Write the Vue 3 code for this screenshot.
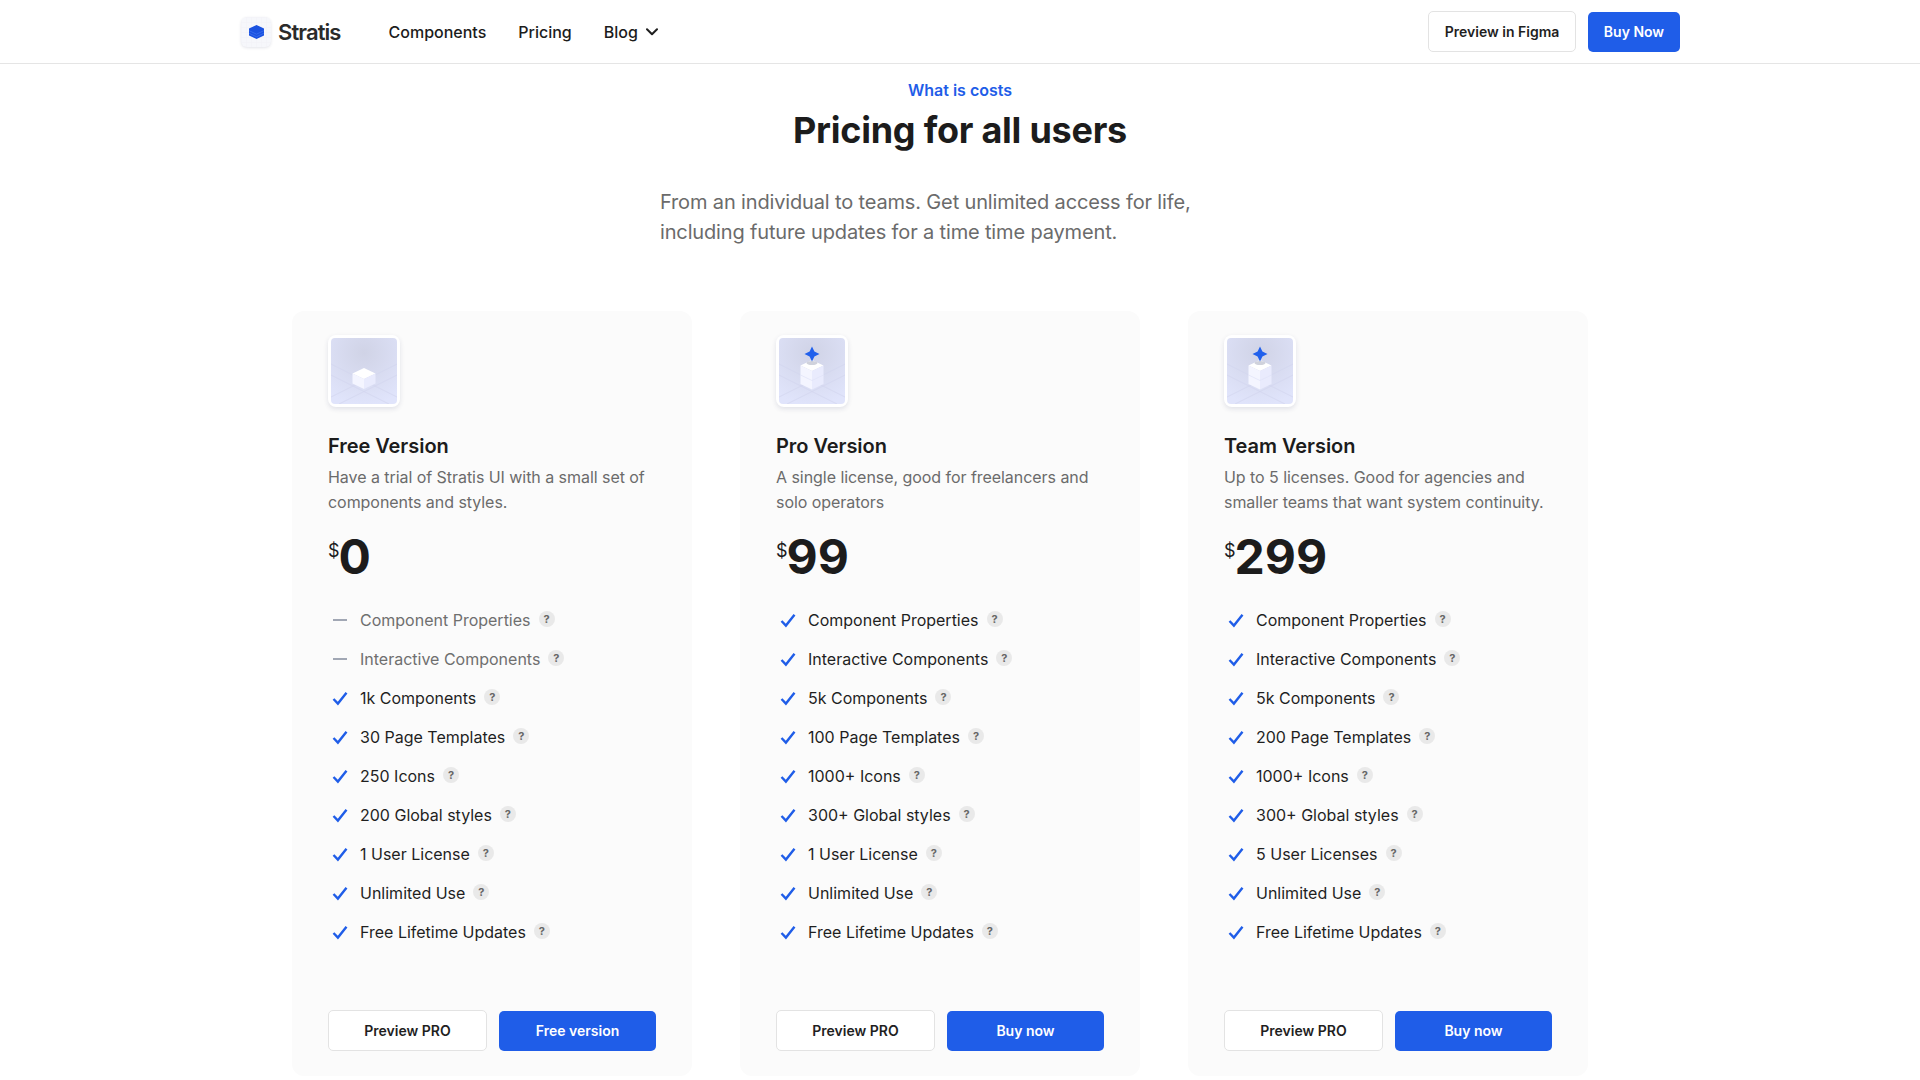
<template>
  <div class="page">
    <header class="topbar">
      <div class="topbar-inner">
        <a class="brand">
          <span class="brand-mark">
            <svg viewBox="0 0 30 30" width="30" height="30">
              <defs>
                <pattern id="markgrid" width="5" height="5" patternUnits="userSpaceOnUse">
                  <path d="M5 0H0V5" fill="none" stroke="#eceef5" stroke-width="0.6" />
                </pattern>
              </defs>
              <rect width="30" height="30" fill="url(#markgrid)" />
              <path d="M15.5 8l7.5 3.6v6.8L15.5 22 8 18.4v-6.8z" fill="#1b52e0" />
              <path d="M8 13.6l7.5 3.6 7.5-3.6M8 16.2l7.5 3.6 7.5-3.6" fill="none" stroke="#3f74f2" stroke-width="0.7" />
            </svg>
          </span>
          <span class="brand-name">Stratis</span>
        </a>
        <nav class="nav">
          <a>Components</a>
          <a>Pricing</a>
          <a class="nav-drop">
            Blog
            <svg viewBox="0 0 12 8" width="12" height="8">
              <path d="M1 1.2l5 5 5-5" fill="none" stroke="#1f1f1f" stroke-width="2" stroke-linecap="round" stroke-linejoin="round" />
            </svg>
          </a>
        </nav>
        <div class="topbar-actions">
          <button class="btn btn-outline btn-figma">Preview in Figma</button>
          <button class="btn btn-primary btn-buy">Buy Now</button>
        </div>
      </div>
    </header>

    <section class="intro">
      <p class="eyebrow">What is costs</p>
      <h1>Pricing for all users</h1>
      <p class="lead">
        From an individual to teams. Get unlimited access for life,<br />
        including future updates for a time time payment.
      </p>
    </section>

    <section class="plans">
      <article v-for="plan in plans" :key="plan.id" class="plan">
        <div class="plan-icon">
          <svg viewBox="0 0 66 66" width="66" height="66">
            <defs>
              <radialGradient :id="'glow-' + plan.id" cx="0.5" cy="0.22" r="0.8">
                <stop offset="0" stop-color="#d0d3e6" />
                <stop offset="1" stop-color="#e0e4fb" />
              </radialGradient>
            </defs>
            <rect width="66" height="66" rx="4" :fill="'url(#glow-' + plan.id + ')'" />
            <path
              d="M0 26l66 33M0 37l58 29M66 26L0 59M66 37L8 66"
              fill="none"
              stroke="#d2d6ee"
              stroke-width="0.7"
            />
            <template v-if="plan.tall">
              <path d="M33 22l11.5 5.5L33 33l-11.5-5.5z" fill="#ffffff" />
              <path d="M21.5 27.5V46L33 51.5V33z" fill="#f4f5ff" />
              <path d="M44.5 27.5V46L33 51.5V33z" fill="#e9ebfd" />
              <path d="M21.5 37L33 42.5 44.5 37" fill="none" stroke="#dfe2f8" stroke-width="0.7" />
              <ellipse cx="33" cy="25" rx="5.5" ry="2" fill="#d0d2dc" />
              <path d="M33 8.5l2.4 5.1 5.1 2.4-5.1 2.4-2.4 5.1-2.4-5.1-5.1-2.4 5.1-2.4z" fill="#2160ec" />
            </template>
            <template v-else>
              <path d="M33 30l11.5 5.5L33 41l-11.5-5.5z" fill="#ffffff" />
              <path d="M21.5 35.5v10L33 51V41z" fill="#f4f5ff" />
              <path d="M44.5 35.5v10L33 51V41z" fill="#e9ebfd" />
            </template>
          </svg>
        </div>

        <h2>{{ plan.name }}</h2>
        <p class="plan-desc">{{ plan.desc }}</p>
        <p class="plan-price"><span class="currency">$</span>{{ plan.price }}</p>

        <ul class="features">
          <li v-for="item in plan.features" :key="item.label" :class="{ off: item.off }">
            <svg v-if="item.off" class="mark" viewBox="0 0 16 16" width="16" height="16">
              <path d="M1 8h14" stroke="#8b93a3" stroke-width="1.6" fill="none" />
            </svg>
            <svg v-else class="mark" viewBox="0 0 16 16" width="16" height="16">
              <path d="M1.5 9l4.4 4.6L14.5 2.8" stroke="#1f5de8" stroke-width="2.4" fill="none" />
            </svg>
            <span>{{ item.label }}</span>
            <span class="help">?</span>
          </li>
        </ul>

        <div class="plan-actions">
          <button class="btn btn-outline btn-preview">Preview PRO</button>
          <button class="btn btn-primary btn-cta">{{ plan.cta }}</button>
        </div>
      </article>
    </section>
  </div>
</template>

<script setup>
const makeFeatures = (first, labels) => [
  ...first,
  ...labels.map((label) => ({ label }))
]

const plans = [
  {
    id: 'free',
    name: 'Free Version',
    desc: 'Have a trial of Stratis UI with a small set of components and styles.',
    price: '0',
    cta: 'Free version',
    tall: false,
    features: makeFeatures(
      [
        { label: 'Component Properties', off: true },
        { label: 'Interactive Components', off: true }
      ],
      ['1k Components', '30 Page Templates', '250 Icons', '200 Global styles', '1 User License', 'Unlimited Use', 'Free Lifetime Updates']
    )
  },
  {
    id: 'pro',
    name: 'Pro Version',
    desc: 'A single license, good for freelancers and solo operators',
    price: '99',
    cta: 'Buy now',
    tall: true,
    features: makeFeatures(
      [],
      ['Component Properties', 'Interactive Components', '5k Components', '100 Page Templates', '1000+ Icons', '300+ Global styles', '1 User License', 'Unlimited Use', 'Free Lifetime Updates']
    )
  },
  {
    id: 'team',
    name: 'Team Version',
    desc: 'Up to 5 licenses. Good for agencies and smaller teams that want system continuity.',
    price: '299',
    cta: 'Buy now',
    tall: true,
    features: makeFeatures(
      [],
      ['Component Properties', 'Interactive Components', '5k Components', '200 Page Templates', '1000+ Icons', '300+ Global styles', '5 User Licenses', 'Unlimited Use', 'Free Lifetime Updates']
    )
  }
]
</script>

<style>
html,
body {
  background: #fff;
}
</style>

<style scoped>
.page {
  font-family: Inter, "Liberation Sans", sans-serif;
  color: #1c1c1c;
}

.topbar {
  height: 64px;
  box-sizing: border-box;
  border-bottom: 1px solid #e5e5e5;
}

.topbar-inner {
  width: 1440px;
  height: 63px;
  margin: 0 auto;
  display: flex;
  align-items: center;
}

.brand {
  display: flex;
  align-items: center;
  gap: 7px;
  margin-left: 1px;
}

.brand-mark {
  width: 30px;
  height: 30px;
  border-radius: 6px;
  overflow: hidden;
  background: #f6f7fb;
  box-shadow: 0 1px 3px rgba(30, 40, 90, 0.12);
}

.brand-mark svg {
  display: block;
}

.brand-name {
  font-size: 22px;
  font-weight: 600;
  letter-spacing: -0.9px;
  color: #2a2a2a;
}

.nav {
  display: flex;
  align-items: center;
  gap: 32px;
  margin-left: 48px;
  font-size: 16px;
  font-weight: 500;
}

.nav-drop {
  display: flex;
  align-items: center;
  gap: 8px;
}

.topbar-actions {
  margin-left: auto;
  display: flex;
  align-items: center;
  gap: 12px;
}

.btn {
  height: 41px;
  box-sizing: border-box;
  border-radius: 5px;
  font: 600 14px Inter, "Liberation Sans", sans-serif;
  padding: 0;
}

.btn-outline {
  background: #fff;
  color: #1f1f1f;
  border: 1px solid #e3e3e3;
}

.btn-primary {
  height: 40px;
  background: #1f5de8;
  color: #fff;
  border: none;
}

.btn-figma {
  width: 148px;
}

.btn-buy {
  width: 92px;
}

.intro {
  width: 600px;
  margin: 0 auto;
}

.eyebrow {
  margin: 16px 0 0;
  text-align: center;
  font-size: 16px;
  line-height: 20px;
  font-weight: 600;
  color: #1f5de8;
}

h1 {
  margin: 7px 0 0;
  text-align: center;
  font-size: 36px;
  line-height: 46px;
  font-weight: 700;
  letter-spacing: -0.25px;
}

.lead {
  margin: 34px 0 0;
  font-size: 20px;
  line-height: 30px;
  letter-spacing: -0.15px;
  color: #6b6b6b;
}

.plans {
  display: grid;
  grid-template-columns: repeat(3, 400px);
  gap: 48px;
  margin: 64px 0 0 292px;
}

.plan {
  height: 765px;
  box-sizing: border-box;
  padding: 24px 36px 0;
  background: #fbfbfb;
  border-radius: 12px;
  display: flex;
  flex-direction: column;
}

.plan-icon {
  width: 72px;
  height: 72px;
  box-sizing: border-box;
  padding: 3px;
  background: #fff;
  border-radius: 8px;
  box-shadow: 0 2px 5px rgba(30, 40, 90, 0.12);
}

.plan-icon svg {
  display: block;
}

h2 {
  margin: 26px 0 0;
  font-size: 20px;
  line-height: 26px;
  font-weight: 600;
  letter-spacing: -0.05px;
}

.plan-desc {
  margin: 6px 0 0;
  height: 50px;
  font-size: 16px;
  line-height: 25px;
  letter-spacing: -0.05px;
  color: #6b6b6b;
}

.plan-price {
  margin: 11px 0 0;
  font-size: 48px;
  line-height: 62px;
  font-weight: 700;
  display: flex;
  align-items: flex-start;
}

.currency {
  font-size: 18px;
  line-height: 20px;
  font-weight: 400;
  margin: 15px -1px 0 0;
}

.features {
  list-style: none;
  margin: 20px 0 0;
  padding: 0;
  display: grid;
  gap: 15px;
  font-size: 16px;
  line-height: 24px;
}

.features li {
  display: flex;
  align-items: center;
  color: #1f1f1f;
}

.features li.off {
  color: #6f6f6f;
}

.mark {
  margin: 0 12px 0 4px;
  flex: none;
}

.help {
  width: 16px;
  height: 16px;
  margin: -2px 0 0 8px;
  border-radius: 50%;
  background: #e9e9e9;
  color: #666;
  font-size: 11px;
  line-height: 16px;
  font-weight: 700;
  text-align: center;
}

.plan-actions {
  margin-top: auto;
  margin-bottom: 25px;
  display: flex;
  align-items: center;
  gap: 12px;
}

.btn-preview {
  width: 159px;
}

.btn-cta {
  width: 157px;
}
</style>
